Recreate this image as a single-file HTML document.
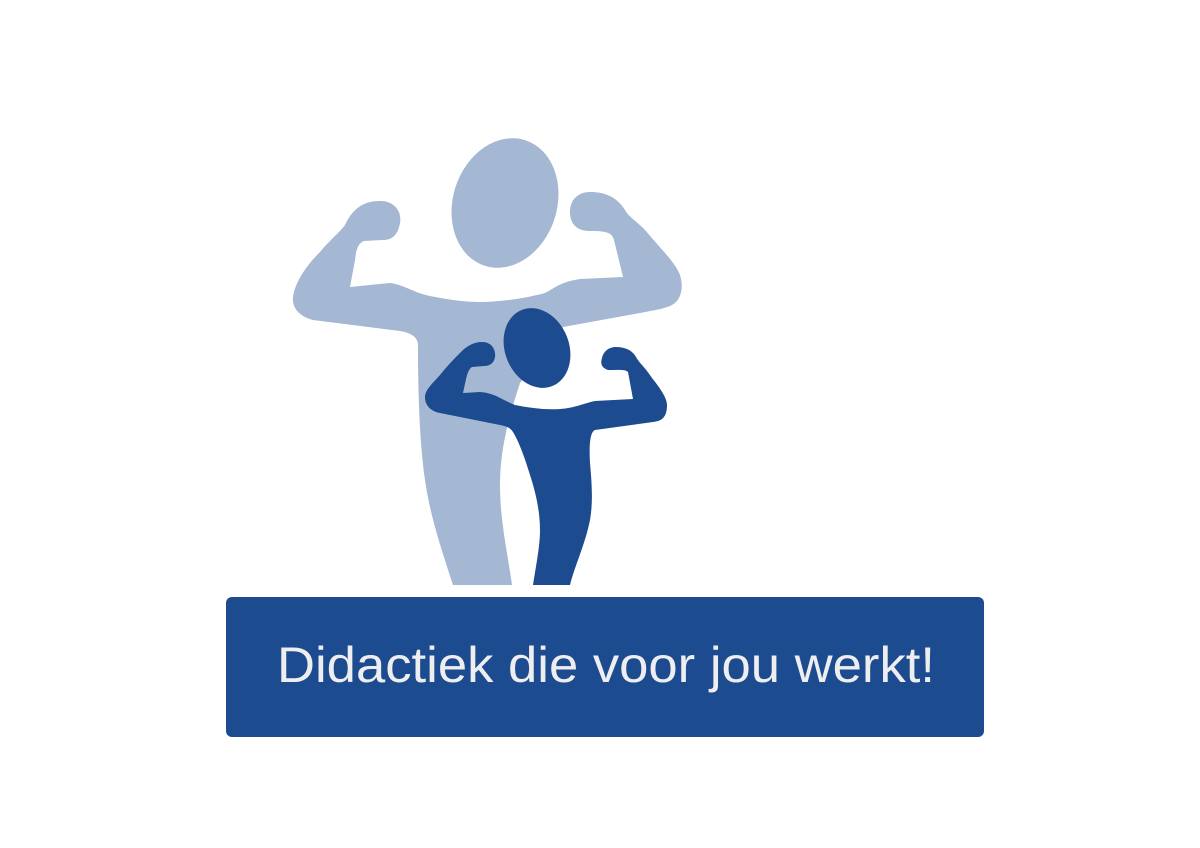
<!DOCTYPE html>
<html><head><meta charset="utf-8"><style>
html,body{margin:0;padding:0;background:#fff;width:1200px;height:848px;overflow:hidden}
</style></head><body>
<svg width="1200" height="848" viewBox="0 0 1200 848" xmlns="http://www.w3.org/2000/svg">
<ellipse cx="505" cy="203" rx="52" ry="66" transform="rotate(18 505 203)" fill="#a4b7d3"/>
<path fill="#a4b7d3" d="M380,201 C395,201 402,212 400,223 C398,235 392,240 383,240 L364,241 C358,243 356,250 355,260 L350,287 L390,283 C405,285 412,292 430,296 C450,300 465,302 480,302 C505,302 530,297 545,293 C555,288 560,282 580,279 L623,277 L614,240 C612,232 605,231 590,231 C575,231 570,222 570,212 C570,198 580,192 590,192 C605,192 617,197 625,210 C628,216 635,220 645,230 C660,248 675,262 680,275 C684,288 681,300 672,305 C664,309 655,310 640,313 L563,327 L520,383 C508,420 500,450 500,485 C500,520 507,550 512,585 L453,585 C440,545 430,515 425,480 C420,445 418,400 418,345 C418,338 412,333 400,331 L313,320 C298,316 292,307 293,297 C295,283 305,267 320,252 C330,240 340,232 345,225 C352,210 362,201 380,201 Z"/>
<ellipse cx="537" cy="348" rx="32" ry="41" transform="rotate(-22 537 348)" fill="#1c4b8f"/>
<path fill="#1c4b8f" d="M482,342 C492,342 496,350 495,357 C494,363 490,366 484,366 L472,367 C467,370 466,380 463,393 L480,392 C495,393 502,400 515,405 C530,408 545,410 560,409 C575,408 585,403 595,401 L633,399 L628,372 C625,369 618,370 608,370 C602,368 600,364 602,358 C604,350 610,347 616,347 C625,347 632,350 636,357 C640,364 645,367 652,378 C660,388 667,398 667,405 C667,416 663,421 653,422 L595,430 C590,432 589,445 590,463 C592,485 593,503 590,520 C585,545 575,565 570,585 L533,585 C537,560 540,545 540,530 C540,510 535,490 530,475 C524,455 518,440 513,432 C510,427 505,426 500,425 L440,413 C430,411 425,405 425,397 C425,390 432,384 440,375 C448,365 455,358 462,351 C467,346 474,342 482,342 Z"/>
<rect x="226" y="597" width="758" height="140" rx="6" fill="#1c4b8f"/>
<text x="277" y="682" font-family="Liberation Sans, sans-serif" font-size="50" fill="#eeeef0" textLength="658" lengthAdjust="spacingAndGlyphs">Didactiek die voor jou werkt!</text>
</svg>
</body></html>
